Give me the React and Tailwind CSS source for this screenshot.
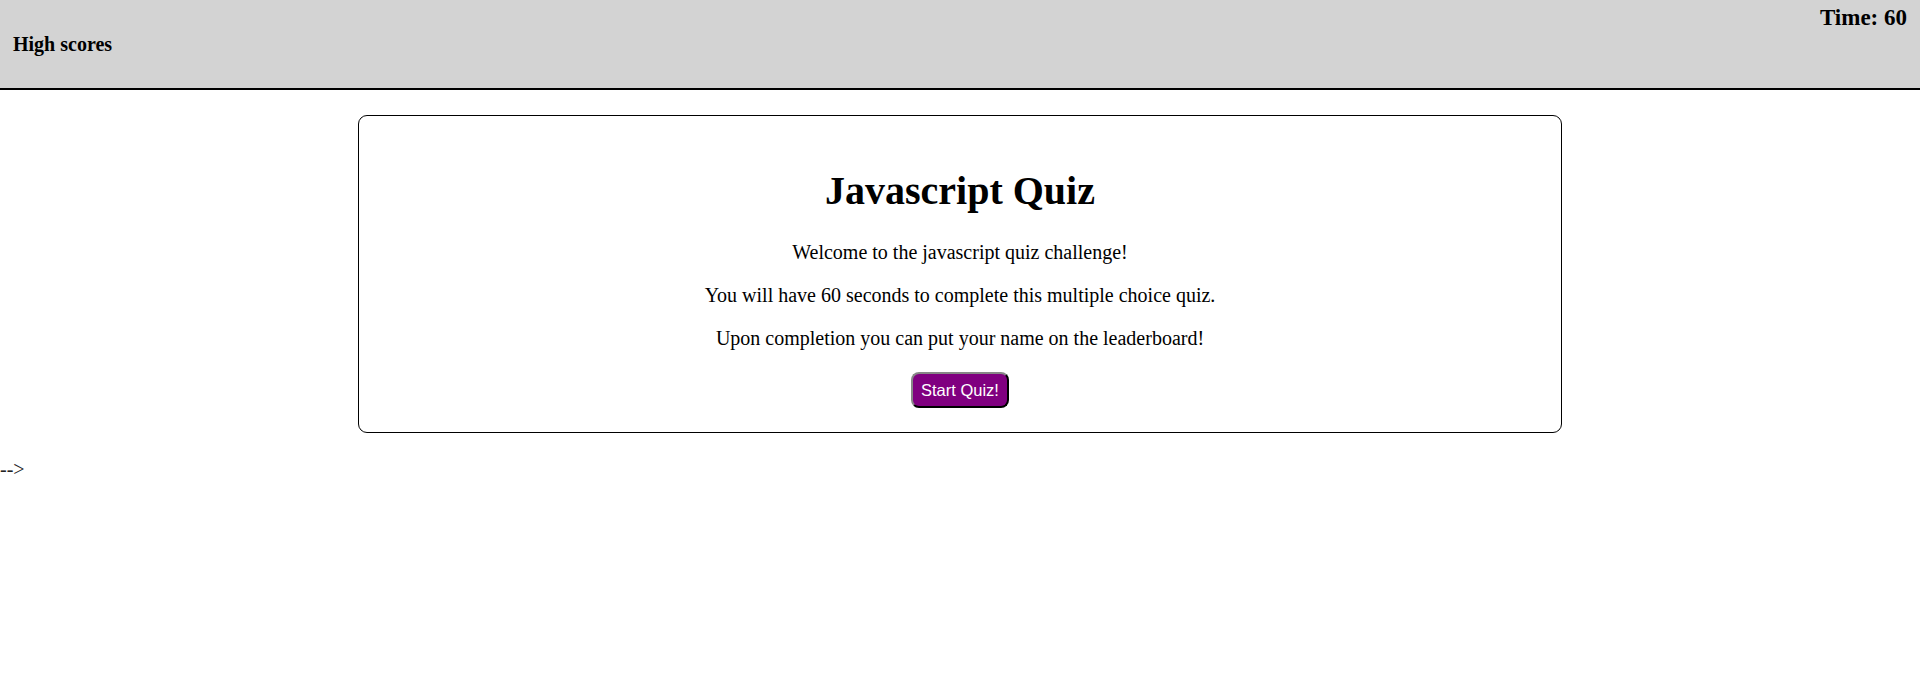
import React from "react";

function Header() {
  return (
    <header className="flex justify-between items-start h-[90px] bg-[#d3d3d3] border-b-2 border-black px-[13px]">
      <a href="#" className="mt-[33px] text-[20px] leading-[23px] font-bold text-black">
        High scores
      </a>
      <div className="mt-[5px] text-[23px] leading-[26px] font-bold text-black">
        Time: 60
      </div>
    </header>
  );
}

function StartCard() {
  return (
    <section className="w-[1204px] mx-auto mt-[25px] mb-[25px] border border-black rounded-[9px] pt-[52px] pb-[24px] text-center">
      <h1 className="text-[40px] leading-[46px] font-bold mb-[27px]">Javascript Quiz</h1>
      <p className="leading-[23px] mb-5">Welcome to the javascript quiz challenge!</p>
      <p className="leading-[23px] mb-5">
        You will have 60 seconds to complete this multiple choice quiz.
      </p>
      <p className="leading-[23px] mb-[22px]">
        Upon completion you can put your name on the leaderboard!
      </p>
      <button
        className="h-[36px] px-[8px] bg-[#800080] text-white text-[16.5px] leading-[18px] rounded-[8px] border-2 [border-style:outset] border-[#333] [font-family:'Liberation_Sans',Arial,sans-serif]"
      >
        Start Quiz!
      </button>
    </section>
  );
}

export default function App() {
  return (
    <div className="min-h-[698px] bg-white text-black text-[20px] [font-family:'Liberation_Serif','Times_New_Roman',serif]">
      <Header />
      <StartCard />
      <div className="leading-[23px] text-[#222]">--&gt;</div>
    </div>
  );
}
